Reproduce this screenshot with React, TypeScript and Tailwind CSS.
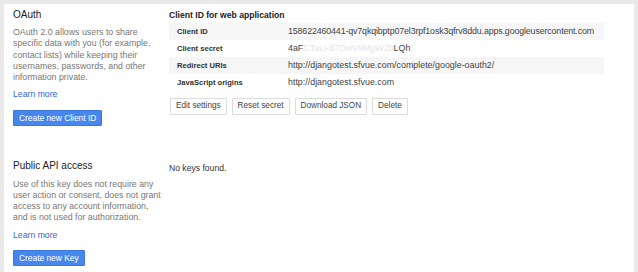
import React from "react";

const ROWS = [
  { label: "Client ID", value: "158622460441-qv7qkqibptp07el3rpf1osk3qfrv8ddu.apps.googleusercontent.com", tight: true },
  { label: "Client secret", value: null, tight: false },
  { label: "Redirect URIs", value: "http://djangotest.sfvue.com/complete/google-oauth2/", tight: false },
  { label: "JavaScript origins", value: "http://djangotest.sfvue.com", tight: false },
];

const ACTIONS = ["Edit settings", "Reset secret", "Download JSON", "Delete"];

const OAUTH_LINES = [
  "OAuth 2.0 allows users to share",
  "specific data with you (for example,",
  "contact lists) while keeping their",
  "usernames, passwords, and other",
  "information private.",
];

const KEY_LINES = [
  "Use of this key does not require any",
  "user action or consent, does not grant",
  "access to any account information,",
  "and is not used for authorization.",
];

function BlueButton({ children }: { children: React.ReactNode }) {
  return (
    <button className="h-[16px] px-[5px] bg-[#4787ed] border border-[#3a78e0] rounded-[1px] text-white text-[8.4px] leading-none">
      {children}
    </button>
  );
}

export default function App() {
  return (
    <div
      className="h-[272px] w-[638px] bg-[#e9e9e9] pt-[4px] pl-[4px] pr-[4px] overflow-hidden"
      style={{ fontFamily: "'Liberation Sans', Arial, sans-serif" }}
    >
      <div className="h-full bg-white">
        {/* OAuth */}
        <div className="flex h-[146px]">
          <div className="w-[165px] shrink-0 pl-[9px] pt-[5px]">
            <h2 className="text-[10px] leading-[12px] text-[#222]">OAuth</h2>
            <p className="mt-[6px] text-[8.8px] leading-[11.3px] text-[#777] whitespace-nowrap">
              {OAUTH_LINES.map((l) => (
                <span key={l} className="block">{l}</span>
              ))}
            </p>
            <a className="block mt-[5px] text-[8.7px] leading-[12px] text-[#3367d6]">Learn more</a>
            <div className="mt-[10px] flex">
              <BlueButton>Create new Client ID</BlueButton>
            </div>
          </div>

          <div className="flex-1 pt-[5px]">
            <div className="text-[8.6px] leading-[12px] font-bold text-[#222]">
              Client ID for web application
            </div>
            <div className="mt-[2px] w-[435px]">
              {ROWS.map((row, i) => (
                <div
                  key={row.label}
                  className={`flex items-center h-[17px] ${i % 2 === 0 ? "bg-[#f6f6f6]" : "bg-white"}`}
                >
                  <div className="w-[119px] shrink-0 pl-[8px] text-[7.6px] font-bold text-[#333]">{row.label}</div>
                  <div
                    className={`text-[8.9px] text-[#444] whitespace-nowrap ${row.tight ? "tracking-[-0.15px]" : ""}`}
                  >
                    {row.value ?? (
                      <>
                        4aF<span className="text-[#e4e4e4]">CTaLi-d7OwV9MgW2b</span>LQh
                      </>
                    )}
                  </div>
                </div>
              ))}
            </div>
            <div className="flex gap-[5px] mt-[7px] ml-[1px]">
              {ACTIONS.map((a) => (
                <button
                  key={a}
                  className="h-[17px] px-[5px] bg-white border border-[#dcdcdc] rounded-[1px] text-[8.2px] leading-none text-[#444]"
                >
                  {a}
                </button>
              ))}
            </div>
          </div>
        </div>

        {/* Public API access */}
        <div className="flex">
          <div className="w-[165px] shrink-0 pl-[9px] pt-[10px]">
            <h2 className="text-[10px] leading-[12px] text-[#222]">Public API access</h2>
            <p className="mt-[7px] text-[8.8px] leading-[11px] text-[#777] whitespace-nowrap">
              {KEY_LINES.map((l) => (
                <span key={l} className="block">{l}</span>
              ))}
            </p>
            <a className="block mt-[6px] text-[8.7px] leading-[12px] text-[#3367d6]">Learn more</a>
            <div className="mt-[9px] flex">
              <BlueButton>Create new Key</BlueButton>
            </div>
          </div>
          <div className="flex-1 pt-[12px]">
            <div className="text-[8.6px] leading-[12px] text-[#333]">No keys found.</div>
          </div>
        </div>
      </div>
    </div>
  );
}
